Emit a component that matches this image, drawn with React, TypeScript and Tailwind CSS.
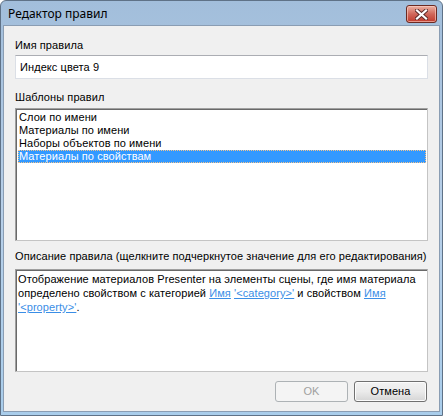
const font = { fontFamily: '"Liberation Sans", Arial, sans-serif' };

function CloseButton() {
  return (
    <div className="w-[31px] h-[18px] rounded-[3px] border border-[#6b2a22] bg-gradient-to-b from-[#eab0a2] via-[#d0675a] to-[#c0392b] flex items-center justify-center shadow-[inset_0_0_0_1px_rgba(255,210,200,0.6)]">
      <svg width="13" height="11" viewBox="0 0 13 11">
        <path
          d="M2 1.5 L11 9.5 M11 1.5 L2 9.5"
          stroke="#5a2a28"
          strokeWidth="4"
          strokeLinecap="square"
        />
        <path
          d="M2 1.5 L11 9.5 M11 1.5 L2 9.5"
          stroke="#ffffff"
          strokeWidth="2.2"
          strokeLinecap="square"
        />
      </svg>
    </div>
  );
}

export default function App() {
  const items = ['Слои по имени', 'Материалы по имени', 'Наборы объектов по имени', 'Материалы по свойствам'];
  const selected = 3;

  return (
    <div className="w-[443px] h-[416px] bg-white">
      <div className="w-full h-full rounded-t-[6px] border border-[#5f7287] bg-gradient-to-b from-[#a2bedb] via-[#b7cfe8] to-[#a9cdeb] flex flex-col">
        {/* Title bar */}
        <div className="h-[24px] flex items-start pl-[7px] pr-[5px] shrink-0">
          <span className="mt-[6px] text-[12px] leading-[14px] text-black" style={{ fontFamily: '"Noto Sans", "Open Sans", sans-serif' }}>
            Редактор правил
          </span>
          <div className="ml-auto mt-[4px]">
            <CloseButton />
          </div>
        </div>

        {/* Client area */}
        <div className="flex-1 mx-[2px] mb-[3px] bg-[#f0f0f0] border border-[#8a9db3] flex flex-col px-[11px] pt-[13px] text-[11px] leading-[13px] tracking-[0.08px] text-black" style={font}>
          <div>Имя правила</div>
          <div className="mt-[3px] h-[24px] bg-white border border-[#dbdfe6] border-t-[#abadb3] flex items-center pl-[4px]">
            Индекс цвета 9
          </div>

          <div className="mt-[12px]">Шаблоны правил</div>
          <div className="mt-[4px] h-[133px] border border-[#a0a0a0] border-r-[#c4c4c4] border-b-[#c4c4c4] bg-white">
            <div className="h-full border-l border-t border-[#696969] pt-px px-px">
              {items.map((it, i) => (
                <div
                  key={it}
                  className={`h-[13px] leading-[13px] pl-[1px] ${
                    i === selected ? 'bg-[#3399ff] text-white outline outline-1 outline-dotted outline-[#f5c38a] -outline-offset-1' : ''
                  }`}
                >
                  {it}
                </div>
              ))}
            </div>
          </div>

          <div className="mt-[9px]">Описание правила (щелкните подчеркнутое значение для его редактирования)</div>
          <div className="mt-[6px] h-[103px] border border-[#a0a0a0] border-r-[#c4c4c4] border-b-[#c4c4c4] bg-white">
            <div className="h-full border-l border-t border-[#696969] pl-[1px] pt-px leading-[14px] whitespace-nowrap">
              <div>Отображение материалов Presenter на элементы сцены, где имя материала</div>
              <div>
                определено свойством с категорией <span className="text-[#3a8ee6] underline">Имя</span>{' '}
                <span className="text-[#3a8ee6] underline">'&lt;category&gt;'</span> и свойством{' '}
                <span className="text-[#3a8ee6] underline">Имя</span>
              </div>
              <div>
                <span className="text-[#3a8ee6] underline">'&lt;property&gt;'</span>.
              </div>
            </div>
          </div>

          <div className="mt-[9px] flex justify-end gap-[6px] pr-px">
            <div className="w-[73px] h-[21px] rounded-[3px] border border-[#adb2b5] bg-[#f4f4f4] text-[#a0a0a0] flex items-center justify-center">
              OK
            </div>
            <div className="w-[73px] h-[21px] rounded-[3px] border border-[#707070] bg-gradient-to-b from-[#f2f2f2] via-[#ebebeb] to-[#d5d5d5] shadow-[inset_0_0_0_1px_#fcfcfc] flex items-center justify-center">
              Отмена
            </div>
          </div>
        </div>
      </div>
    </div>
  );
}
